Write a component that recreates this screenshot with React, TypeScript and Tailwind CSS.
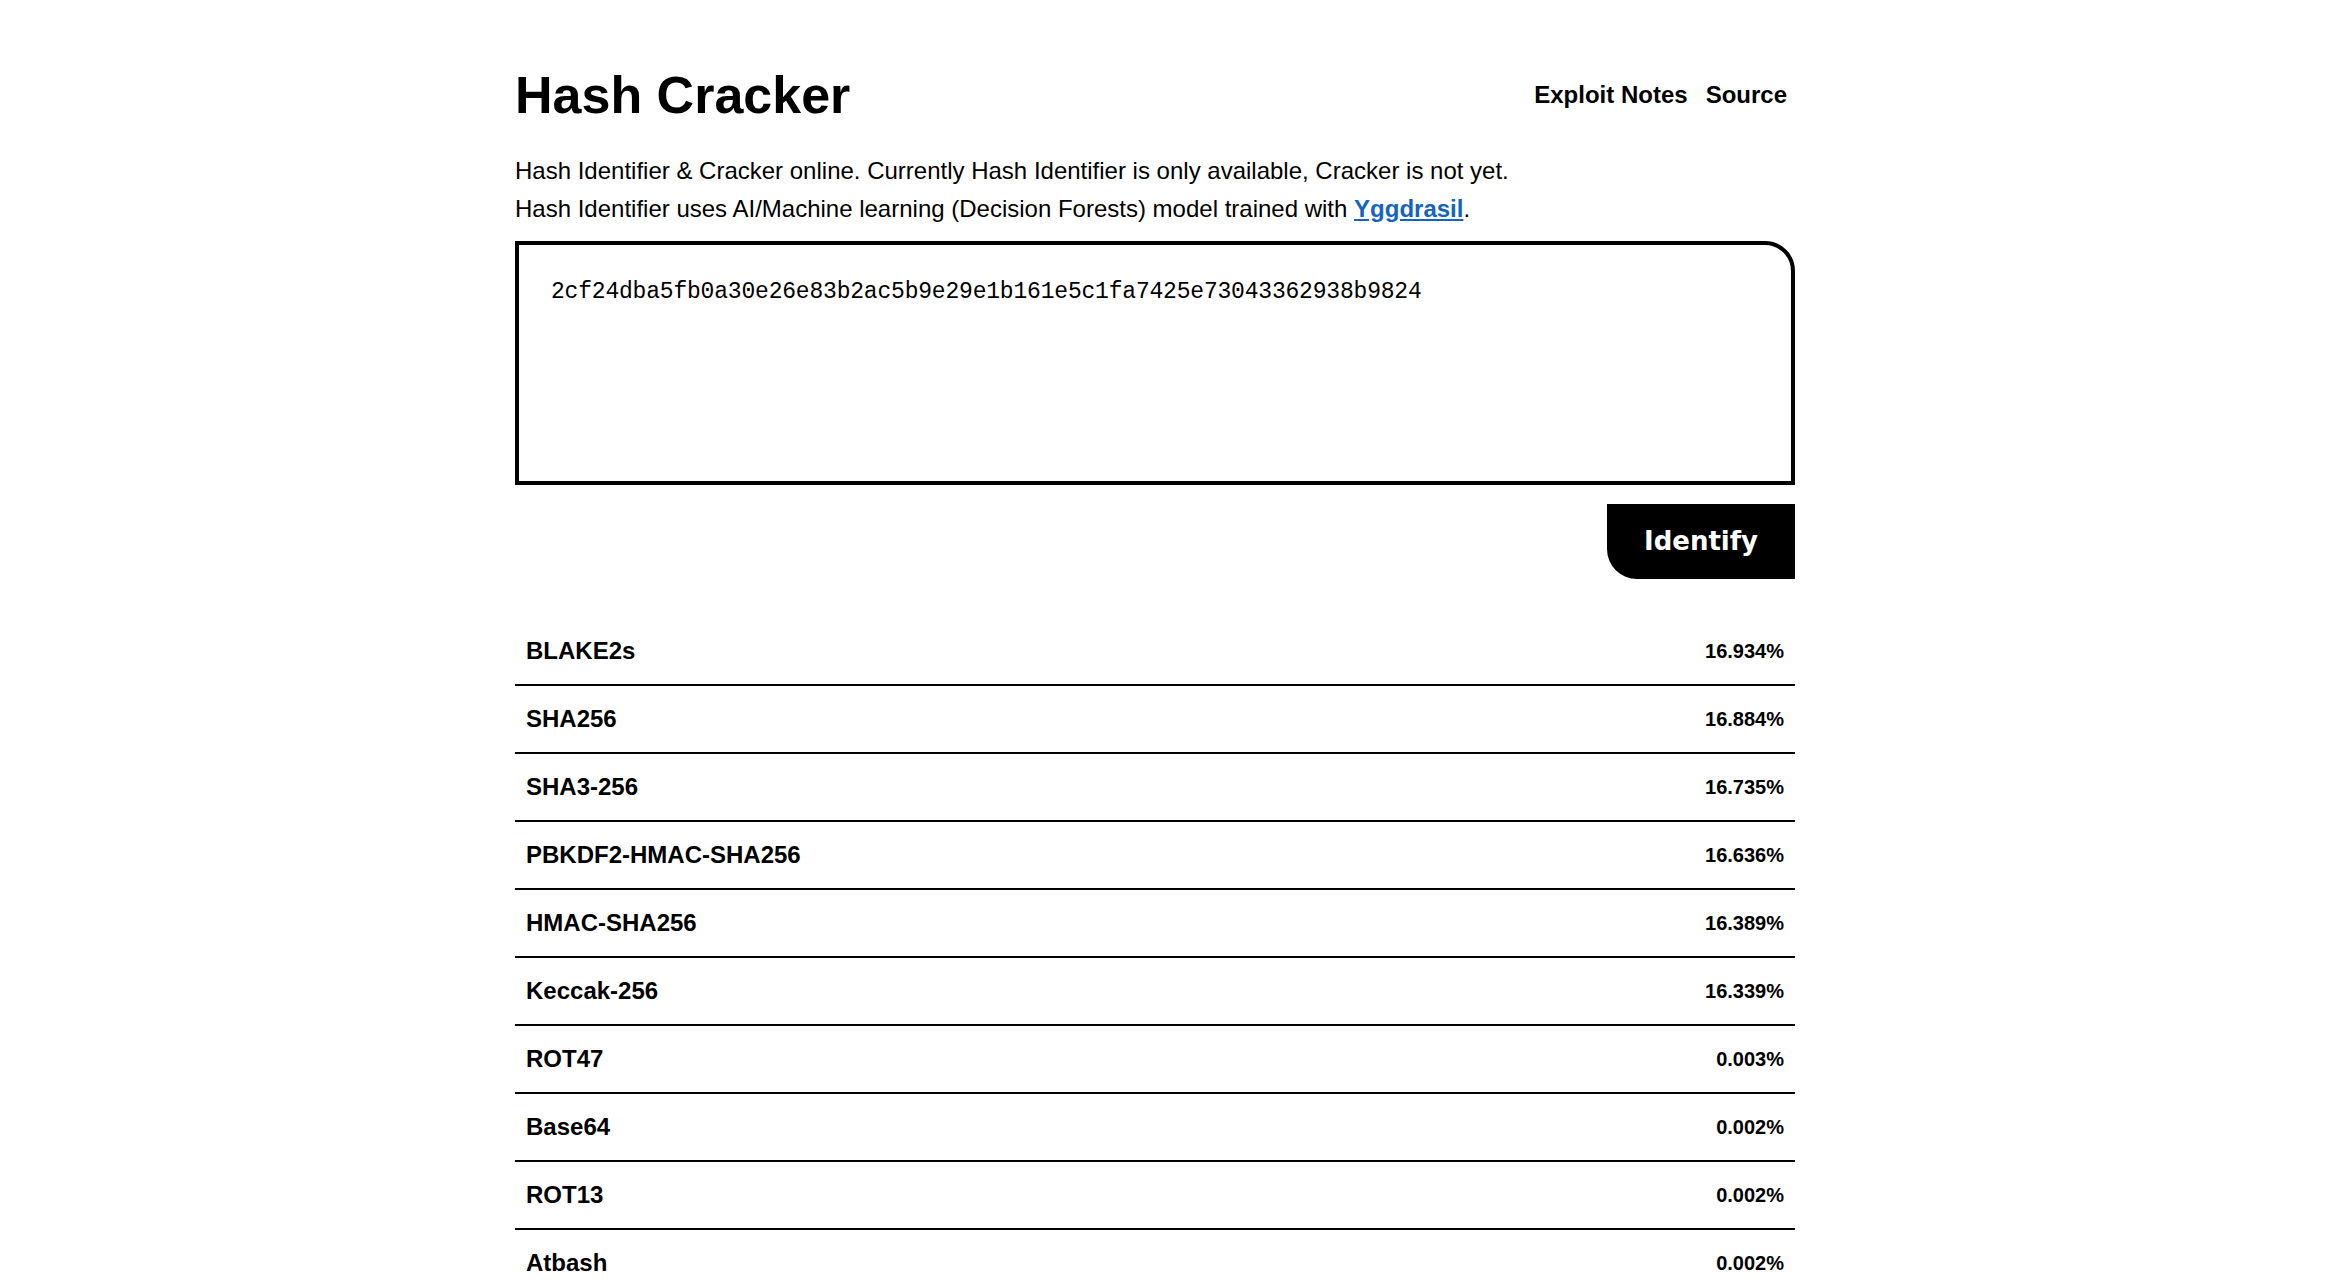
import type { FC } from 'react';

type Guess = { name: string, score: string };

const guesses: Guess[] = [
  { name: 'BLAKE2s', score: '16.934%' },
  { name: 'SHA256', score: '16.884%' },
  { name: 'SHA3-256', score: '16.735%' },
  { name: 'PBKDF2-HMAC-SHA256', score: '16.636%' },
  { name: 'HMAC-SHA256', score: '16.389%' },
  { name: 'Keccak-256', score: '16.339%' },
  { name: 'ROT47', score: '0.003%' },
  { name: 'Base64', score: '0.002%' },
  { name: 'ROT13', score: '0.002%' },
  { name: 'Atbash', score: '0.002%' },
];

const hash = '2cf24dba5fb0a30e26e83b2ac5b9e29e1b161e5c1fa7425e73043362938b9824';

const ResultRow: FC<{ guess: Guess }> = ({ guess }) => (
  <li className="flex h-[68px] items-center justify-between border-b-2 border-black px-[11px]">
    <span className="text-[24px] font-bold">{guess.name}</span>
    <span className="text-[20px] font-bold">{guess.score}</span>
  </li>
);

export default function App() {
  return (
    <div className="min-h-screen bg-white font-['Liberation_Sans',Arial,sans-serif] text-black">
      <main className="ml-[515px] w-[1280px] pt-[64px]">
        <header className="flex h-[62px] items-center justify-between">
          <h1 className="text-[52px] font-bold leading-[62px]">Hash Cracker</h1>
          <nav className="mr-2 flex gap-[18px] text-[24px] font-bold">
            <a href="#">Exploit Notes</a>
            <a href="#">Source</a>
          </nav>
        </header>

        <div className="mt-[26px] text-[24px] leading-[38px]">
          <p>Hash Identifier &amp; Cracker online. Currently Hash Identifier is only available, Cracker is not yet.</p>
          <p>
            Hash Identifier uses AI/Machine learning (Decision Forests) model trained with{' '}
            <a href="#" className="font-bold text-[#1565c0] underline">Yggdrasil</a>.
          </p>
        </div>

        <textarea
          className="mt-[13px] block h-[244px] w-full resize-none rounded-tr-[30px] border-4 border-black px-8 pt-[33px] pb-8 font-['Liberation_Mono',monospace] text-[23px] leading-[28px] tracking-[-0.2px] outline-none"
          defaultValue={hash}
          spellCheck={false}
        />

        <div className="mt-[19px] flex justify-end">
          <button
            className="h-[75px] w-[188px] rounded-bl-[30px] bg-black font-['DejaVu_Sans',Verdana,sans-serif] text-[26px] font-bold text-white"
            type="button"
          >
            Identify
          </button>
        </div>

        <ul className="mt-[39px]">
          {guesses.map((guess) => (
            <ResultRow guess={guess} key={guess.name} />
          ))}
        </ul>
      </main>
    </div>
  );
}
